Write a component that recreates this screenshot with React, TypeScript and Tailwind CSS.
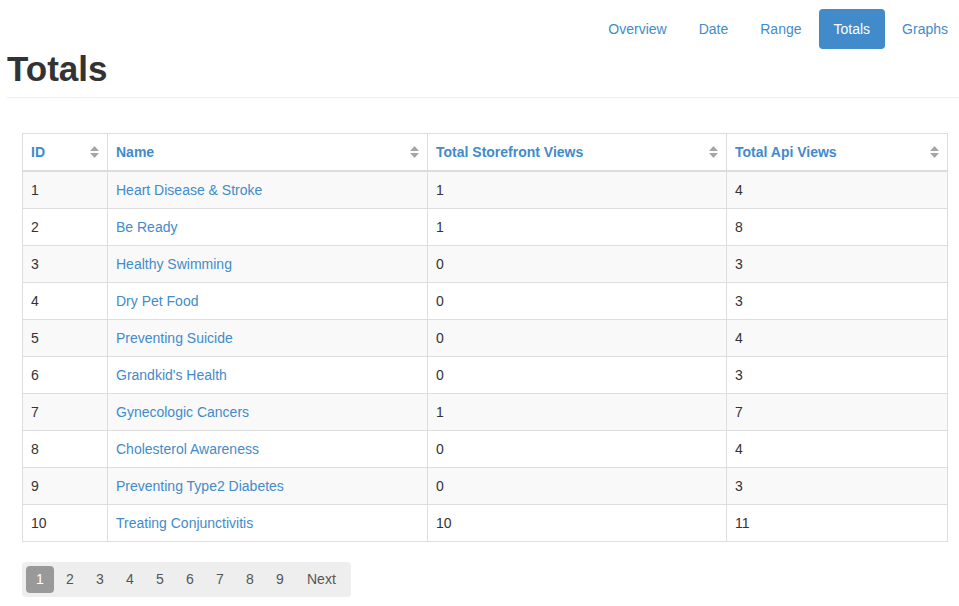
import React from "react";

const rows: [number, string, number, number][] = [
  [1, "Heart Disease & Stroke", 1, 4],
  [2, "Be Ready", 1, 8],
  [3, "Healthy Swimming", 0, 3],
  [4, "Dry Pet Food", 0, 3],
  [5, "Preventing Suicide", 0, 4],
  [6, "Grandkid's Health", 0, 3],
  [7, "Gynecologic Cancers", 1, 7],
  [8, "Cholesterol Awareness", 0, 4],
  [9, "Preventing Type2 Diabetes", 0, 3],
  [10, "Treating Conjunctivitis", 10, 11],
];

function SortIcon() {
  return (
    <svg width="9" height="12" viewBox="0 0 9 12" className="shrink-0">
      <path d="M4.5 0 L9 5 L0 5 Z" fill="#a6a6a6" />
      <path d="M4.5 12 L9 7 L0 7 Z" fill="#a6a6a6" />
    </svg>
  );
}

function Th({ label, w }: { label: string; w: string }) {
  return (
    <th className={`${w} border border-[#dddddd] border-b-2 px-[8px] py-[8px] text-left font-bold leading-[20px]`}>
      <div className="flex items-center justify-between">
        <span className="text-[#428bca]">{label}</span>
        <SortIcon />
      </div>
    </th>
  );
}

export default function App() {
  const navs = ["Overview", "Date", "Range", "Totals", "Graphs"];
  return (
    <div
      className="w-[959px] h-[606px] overflow-hidden bg-white text-[14px] text-[#333333]"
      style={{ fontFamily: '"Liberation Sans", Arial, sans-serif' }}
    >
      <div className="flex justify-end pt-[9px]">
        <ul className="flex gap-[2px]">
          {navs.map((n, i) => (
            <li key={n}>
              <a
                className={`block h-[40px] rounded-[4px] py-[10px] leading-[20px] ${
                  i === navs.length - 1 ? "pl-[15px] pr-[11px]" : "px-[15px]"
                } ${n === "Totals" ? "bg-[#428bca] text-white" : "text-[#428bca]"}`}
              >
                {n}
              </a>
            </li>
          ))}
        </ul>
      </div>
      <div className="ml-[7px] border-b border-[#eeeeee] pb-[8px]">
        <h1 className="text-[35px] leading-[40px] font-bold text-[#333333]">Totals</h1>
      </div>
      <div className="ml-[22px] mt-[35px] w-[926px]">
        <table className="w-full border-collapse">
          <thead>
            <tr>
              <Th label="ID" w="w-[85px]" />
              <Th label="Name" w="w-[320px]" />
              <Th label="Total Storefront Views" w="w-[299px]" />
              <Th label="Total Api Views" w="" />
            </tr>
          </thead>
          <tbody>
            {rows.map((r, i) => (
              <tr key={r[0]} className={i % 2 === 0 ? "bg-[#f9f9f9]" : "bg-white"}>
                <td className="border border-[#dddddd] px-[8px] py-[8px] leading-[20px]">{r[0]}</td>
                <td className="border border-[#dddddd] px-[8px] py-[8px] leading-[20px]">
                  <a className="text-[#428bca]">{r[1]}</a>
                </td>
                <td className="border border-[#dddddd] px-[8px] py-[8px] leading-[20px]">{r[2]}</td>
                <td className="border border-[#dddddd] px-[8px] py-[8px] leading-[20px]">{r[3]}</td>
              </tr>
            ))}
          </tbody>
        </table>
        <div className="mt-[20px] inline-flex gap-[2px] rounded-[4px] bg-[#eeeeee] p-[4px]">
          {[1, 2, 3, 4, 5, 6, 7, 8, 9].map((p) => (
            <span
              key={p}
              className={`flex h-[27px] w-[28px] items-center justify-center rounded-[4px] ${
                p === 1 ? "bg-[#999999] text-white" : "text-[#555555]"
              }`}
            >
              {p}
            </span>
          ))}
          <span className="flex h-[27px] items-center px-[11px] text-[#555555]">Next</span>
        </div>
      </div>
    </div>
  );
}
